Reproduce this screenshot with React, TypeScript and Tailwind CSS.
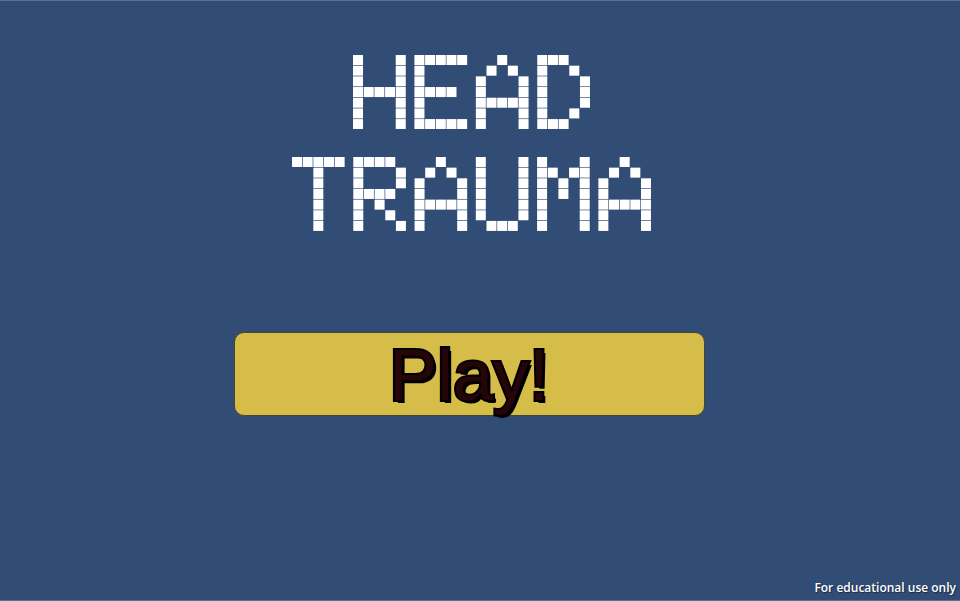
import React from 'react';

// 5x7 pixel letters, one string per row
const glyphs: Record<string, string[]> = {
  H: ['#...#', '#...#', '#...#', '#####', '#...#', '#...#', '#...#'],
  E: ['#####', '#....', '#....', '####.', '#....', '#....', '#####'],
  A: ['..#..', '.#.#.', '#...#', '#...#', '#####', '#...#', '#...#'],
  D: ['###..', '#..#.', '#...#', '#...#', '#...#', '#..#.', '###..'],
  T: ['#####', '..#..', '..#..', '..#..', '..#..', '..#..', '..#..'],
  R: ['####.', '#...#', '#...#', '####.', '#.#..', '#..#.', '#...#'],
  U: ['#...#', '#...#', '#...#', '#...#', '#...#', '#...#', '.###.'],
  M: ['#...#', '##.##', '#.#.#', '#.#.#', '#...#', '#...#', '#...#']
};

const CELL = 30;
const PITCH = 32;
const ADVANCE = 184;

interface PixelWordProps {
  word: string;
  className: string;
}

const PixelWord: React.FC<PixelWordProps> = ({ word, className }) => (
  <svg
    className={className}
    viewBox={`0 0 ${word.length * ADVANCE - 26} 222`}
    fill="currentColor"
    role="img"
    aria-label={word}
  >
    {word.split('').map((letter, n) =>
      glyphs[letter].map((row, y) =>
        row.split('').map((cell, x) =>
          cell === '#' ? (
            <rect
              key={`${n}-${y}-${x}`}
              x={n * ADVANCE + x * PITCH}
              y={y * PITCH}
              width={CELL}
              height={CELL}
            />
          ) : null
        )
      )
    )}
  </svg>
);

const App: React.FC = () => {
  return (
    <div className="min-h-screen flex flex-col bg-[#314d76] border-y border-[#566f9b]">
      <main className="flex flex-col items-center pt-[54px] pr-[18px]">
        <h1 className="flex flex-col items-center gap-7 text-white">
          <PixelWord word="HEAD" className="w-[237px]" />
          <PixelWord word="TRAUMA" className="w-[359px]" />
        </h1>

        <button
          type="button"
          className="mt-[101px] mr-1 h-[84px] w-1/2 rounded-[10px] border border-[#44482f] bg-[#d6bd49] font-['Liberation_Sans',Arial,sans-serif] text-[72px] leading-[84px] text-[#250507] cursor-pointer [-webkit-text-stroke:4px_black] [paint-order:stroke_fill] [text-shadow:3px_3px_0_black]"
        >
          Play!
        </button>
      </main>

      <footer className="mt-auto px-1 pb-0.5 text-right font-['Open_Sans',sans-serif] text-xs leading-5 font-semibold text-white [text-shadow:1px_1px_1px_#1a2a44]">
        For educational use only
      </footer>
    </div>
  );
};

export default App;
